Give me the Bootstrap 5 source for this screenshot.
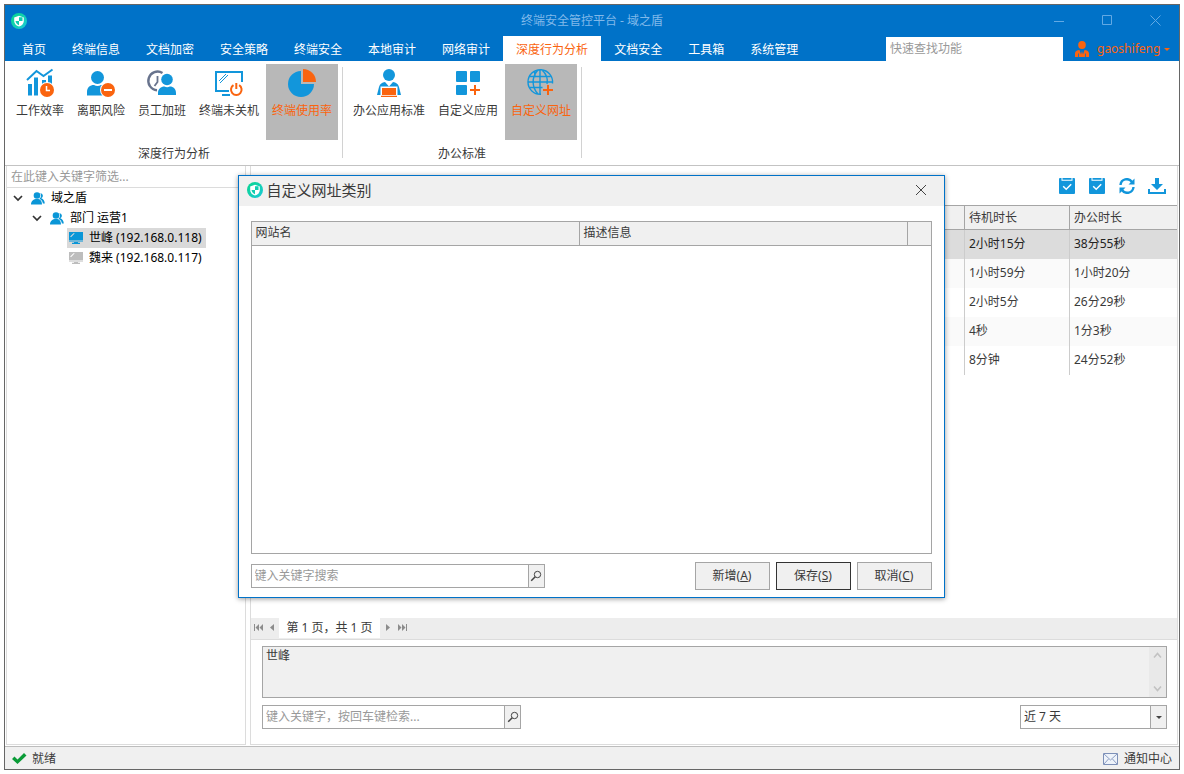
<!DOCTYPE html>
<html lang="zh-CN">
<head>
<meta charset="utf-8">
<meta name="viewport" content="width=device-width, initial-scale=1">
<title>终端安全管控平台 - 域之盾</title>
<link href="https://cdn.jsdelivr.net/npm/bootstrap@5.3.0/dist/css/bootstrap.min.css" rel="stylesheet">
<style>
  :root { --brand: #0072c8; --accent: #fa640f; --sky: #1296db; --line: #dcdcdc; --edge: #a5a5a5; --face: #f0f0f0; --ink: #3a3a3a; }
  body { font: 12px/18px "Noto Sans", "Noto Sans CJK SC", sans-serif; color: var(--ink); background: #fff; }
  button, input, select, textarea { font: inherit; color: inherit; }
  button { background: none; border: 0; padding: 0; }
  svg { display: block; flex: none; }
  .app { min-height: calc(100vh - 8px); margin: 4px; border: 1px solid #666; }
  .app-head { background: var(--brand); }
  .title-row { height: 31px; color: #80b9ea; }
  .title-row .side { flex: 1 1 0; padding-left: 6px; }
  .win-btn { width: 48px; height: 31px; display: grid; place-items: center; color: #62a9e4; }
  .tab-row { height: 25px; }
  .tab-row .nav-link { color: #fff; padding: 5px 13px 2px; line-height: 18px; }
  .tab-row .nav-link.active { color: var(--accent); background: #fff; }
  .quick { width: 177px; height: 24px; border: 0; padding: 0 4px 2px; background: #fff; }
  ::placeholder { color: #999; opacity: 1; }
  .user { color: var(--accent); width: 116px; padding-left: 12px; height: 24px; }
  .caret { width: 0; border: 3px solid transparent; border-top-color: currentColor; border-bottom: 0; }
  .ribbon { border-bottom: 1px solid #c3c3c3; height: 105px; padding: 3px 5px 6px; }
  .rgroup { padding-right: 5px; margin-right: 4px; position: relative; }
  .rgroup::after { content: ""; position: absolute; right: 0; top: 3px; bottom: 1px; border-right: 1px solid #d2d2d2; }
  .rgroup-name { padding-top: 5px; }
  .rbtns { gap: 1px; }
  .rbtn { height: 76px; padding: 4px 6px 0; display: flex; flex-direction: column; align-items: center; gap: 2px; }
  .rbtn svg { width: 32px; height: 32px; }
  .rbtn.on { background: #b8b8b8; color: var(--accent); }
  .work { padding: 0 1px; gap: 4px; }
  .pane { border: 1px solid var(--line); border-top: 0; }
  .side-pane { width: 240px; flex: none; }
  .filter { border: 0; border-bottom: 1px solid var(--line); height: 22px; padding: 0 4px; display: block; width: 100%; }
  .tree { color: #000; padding-left: 6px; }
  .tree ul { padding-left: 19px; }
  .node { height: 20px; gap: 6px; padding-right: 4px; }
  .leaf { padding-left: 2px; margin-left: 16px; width: fit-content; }
  .leaf.sel { background: #d9d9d9; }
  .tools { height: 39px; padding: 0 10px; gap: 10px; }
  .tools button { width: 20px; height: 20px; display: grid; place-items: center; }
  .grid { width: 100%; table-layout: fixed; border-collapse: separate; border-spacing: 0; }
  .grid th { font-weight: 400; background: var(--face); border-right: 1px solid var(--edge); border-bottom: 1px solid var(--edge); height: 24px; padding: 0 4px; }
  .grid th:last-child { border-right: 0; }
  .data th { border-top: 1px solid var(--edge); height: 25px; }
  .data td { height: 29px; padding: 0 4px 1px; border-right: 1px solid #ccc; }
  .data td:last-child { border-right: 0; }
  .data tr:nth-child(even) td { background: #fafafa; }
  .data tr.sel td { background: #dcdcdc; color: #222; }
  .pager { background: #ededed; border-bottom: 1px solid var(--line); height: 22px; padding: 0 3px; color: #8c8c8c; }
  .pager .now { background: #fff; color: var(--ink); height: 20px; padding: 0 4px; line-height: 19px; min-width: 101px; }
  .foot-form { padding: 6px 10px 15px 11px; gap: 7px; }
  .memo-wrap { background: var(--face); border: 1px solid var(--edge); height: 52px; }
  .memo-wrap textarea { border: 0; background: none; resize: none; overflow: hidden; padding: 0 3px; outline: 0; }
  .memo-bar { width: 17px; background: #e9e9e9; color: #c2c2c2; padding: 5px 4px; }
  .combo { border: 1px solid var(--edge); height: 24px; background: #fff; }
  .combo input, .combo select { border: 0; padding: 0 3px; min-width: 0; background: none; appearance: none; outline: 0; }
  .combo .end { width: 16px; border-left: 1px solid var(--edge); background: var(--face); display: grid; place-items: center; color: #444; flex: none; }
  .status { background: var(--face); border-top: 1px solid #bdbdbd; height: 23px; padding: 1px 7px 0; margin-top: 1px; }
  .overlay { position: absolute; inset: 0 2px 2px 0; pointer-events: none; }
  .dlg { width: 100%; max-width: 707px; background: #fff; border: 1px solid var(--brand); box-shadow: 0 1px 5px rgba(0,0,0,.4); pointer-events: auto; }
  .dlg-head { background: var(--face); height: 30px; padding: 0 8px 2px; gap: 4px; font-size: 15px; }
  .dlg-body { padding: 15px 12px 7px; gap: 8px; }
  .list-box { border: 1px solid var(--edge); min-height: 333px; }
  .dlg-btns { gap: 6px; }
  .dlg-btn { width: 75px; height: 28px; border: 1px solid var(--edge); background: var(--face); }
  .dlg-btn.main { border-color: #333; }
  .find-box { width: 294px; }
  .find-row { width: 259px; }
  .range { width: 147px; }
</style>
</head>
<body>
<svg width="0" height="0" class="position-absolute" aria-hidden="true">
  <defs>
    <linearGradient id="lg" x1="0" y1="0" x2="1" y2="1"><stop offset="0" stop-color="#08d68c"/><stop offset="1" stop-color="#1bc9d8"/></linearGradient>
    <symbol id="logo" viewBox="0 0 16 16"><circle cx="8" cy="8" r="8" fill="url(#lg)"/><path d="M8 2.800 12.800 4.500V8c0 2.700-1.900 4.500-4.800 5.600C5.100 12.500 3.200 10.700 3.200 8V4.500z" fill="#fff"/><path d="M8 4.200h3.500V8H8zM4.500 8H8v4.200C6 11.300 4.700 10 4.500 8z" fill="#10cdb0"/></symbol>
    <symbol id="people" viewBox="0 0 14 13"><circle cx="6" cy="3.500" r="3.300"/><path d="M0 12.500C0 9 2.500 7 6 7s5 2 5 5.500zM9.300 1.200a2.600 2.600 0 0 1 1 5c2.200.9 3.400 2.800 3.500 5.300h-1.900c-.3-2-1.300-3.600-3.300-4.700A4.600 4.600 0 0 0 9.300 1.200z"/></symbol>
    <symbol id="pc" viewBox="0 0 14 12"><path fill-rule="evenodd" d="M0 0h14v8.500H0zM2 5.200 5.800 1.300H4.500L1.200 4.500zM0 9.300h14v.5H0zM5 9.500h4v1.300h2V12H3v-1.200h2z"/></symbol>
    <symbol id="down" viewBox="0 0 10 10"><path d="M1 3l4 4 4-4" fill="none" stroke="#333" stroke-width="1.700"/></symbol>
    <symbol id="lens" viewBox="0 0 12 12"><circle cx="7.500" cy="4.500" r="3.200" fill="none" stroke="currentColor"/><path d="M5.200 6.800 1.200 10.800" stroke="currentColor" stroke-width="1.500"/></symbol>
    <symbol id="clip" viewBox="0 0 16 16"><path fill="#1296db" d="M1 0h1.500v2.800h11V0H15a1 1 0 0 1 1 1v14a1 1 0 0 1-1 1H1a1 1 0 0 1-1-1V1a1 1 0 0 1 1-1zM3.500 0h9v1.800h-9z"/><path d="M4.200 8.300 7.200 11.200 12.200 6.200" fill="none" stroke="#fff" stroke-width="1.500"/></symbol>
  </defs>
</svg>

<div class="app d-flex flex-column">
  <header class="app-head">
    <div class="title-row d-flex align-items-center">
      <div class="side"><svg width="16" height="16"><use href="#logo"/></svg></div>
      <div>终端安全管控平台 - 域之盾</div>
      <div class="side d-flex justify-content-end">
        <button class="win-btn" aria-label="最小化"><svg width="11" height="11"><path d="M0 6.500h10" stroke="currentColor"/></svg></button>
        <button class="win-btn" aria-label="最大化"><svg width="11" height="11"><path d="M.5.500h9v9h-9z" fill="none" stroke="currentColor"/></svg></button>
        <button class="win-btn" aria-label="关闭"><svg width="11" height="11"><path d="M.5.500l10 10m0-10-10 10" stroke="currentColor"/></svg></button>
      </div>
    </div>
    <div class="tab-row d-flex align-items-end">
      <nav class="nav flex-nowrap ps-1">
        <a class="nav-link" href="#">首页</a><a class="nav-link" href="#">终端信息</a><a class="nav-link" href="#">文档加密</a><a class="nav-link" href="#">安全策略</a><a class="nav-link" href="#">终端安全</a><a class="nav-link" href="#">本地审计</a><a class="nav-link" href="#">网络审计</a><a class="nav-link active" href="#">深度行为分析</a><a class="nav-link" href="#">文档安全</a><a class="nav-link" href="#">工具箱</a><a class="nav-link" href="#">系统管理</a>
      </nav>
      <input class="quick ms-auto" type="search" placeholder="快速查找功能" aria-label="快速查找功能">
      <button class="user d-flex align-items-center">
        <svg width="14" height="16" fill="currentColor"><ellipse cx="7" cy="4" rx="3.800" ry="4"/><path d="M0 16v-3.500C0 10.300 2 9 4.500 9L6 13.500 7 10l1 3.500L9.500 9C12 9 14 10.300 14 12.500V16z"/><path d="M3.500 12.500V16M10.500 12.500V16" stroke="#0072c8" stroke-width=".8"/></svg>
        <span class="ms-2 me-1">gaoshifeng</span><span class="caret"></span>
      </button>
    </div>
  </header>

  <section class="ribbon d-flex">
    <div class="rgroup">
      <div class="rbtns d-flex">
        <button class="rbtn"><svg viewBox="0 0 32 32"><path d="M3 12 12.500 3l7 5L28.500 1.500" fill="none" stroke="#1296db" stroke-width="2"/><path fill="#1296db" d="M4 16h4v11.500H4zM10 9.500h4v18h-4zM18 12h4v15.500h-4zM24 7.500h4V16h-4z"/><circle cx="23" cy="22" r="8" fill="#fff"/><circle cx="23" cy="22" r="7" fill="#fa640f"/><path d="M22.500 18v4.500H26" fill="none" stroke="#fff" stroke-width="1.500"/></svg>工作效率</button>
        <button class="rbtn"><svg viewBox="0 0 32 32"><circle cx="12.500" cy="9.500" r="6.500" fill="#1296db"/><path d="M2 27.500V24c0-4.500 3-7 7-7 2 1.300 5 1.300 7 0 4 0 7 2.500 7 7v3.500z" fill="#1296db"/><circle cx="23" cy="22" r="8" fill="#fff"/><circle cx="23" cy="22" r="7" fill="#fa640f"/><path d="M19 22h8" stroke="#fff" stroke-width="2"/></svg>离职风险</button>
        <button class="rbtn"><svg viewBox="0 0 32 32"><path d="M11 22.200A9.300 9.300 0 1 1 16.500 5" fill="none" stroke="#68738d" stroke-width="2.400"/><path d="M11.500 8v6l-3 4" fill="none" stroke="#68738d" stroke-width="1.800"/><circle cx="21" cy="11.500" r="7" fill="#fff"/><circle cx="21" cy="11.500" r="5.800" fill="#1296db"/><path d="M12 27v-2c0-4 3-6.500 6.500-6.500 1.700 1 3.600 1 5.300 0C27.500 18.500 30 21 30 25v2z" fill="#1296db"/></svg>员工加班</button>
        <button class="rbtn"><svg viewBox="0 0 32 32"><path d="M16 23H3V4h26v10M9 27h8" fill="none" stroke="#1296db" stroke-width="2"/><path d="m6 13 7-7m-6 9 8-8" stroke="#1296db"/><path d="M20.500 17.200a5.300 5.300 0 1 0 5.600 0M23.300 15v6" fill="none" stroke="#fa640f" stroke-width="2"/></svg>终端未关机</button>
        <button class="rbtn on"><svg viewBox="0 0 32 32"><path d="M15 3a13 13 0 1 0 13 13H15z" fill="#1296db"/><path d="M17 1a13 13 0 0 1 13 13H17z" fill="#fa640f"/></svg>终端使用率</button>
      </div>
      <div class="rgroup-name text-center">深度行为分析</div>
    </div>
    <div class="rgroup">
      <div class="rbtns d-flex">
        <button class="rbtn"><svg viewBox="0 0 32 32"><circle cx="16" cy="7" r="6" fill="#1296db"/><path d="M4 27l2-8c1-3.500 3-4.500 6-5l4 4.500 4-4.500c3 .5 5 1.500 6 5l2 8z" fill="#1296db"/><path d="M7.500 28v-9.500h17V28" fill="#fff"/><path fill="#fa640f" d="M9 20h14v7H9zM8 27.800h16v1.200H8z"/></svg>办公应用标准</button>
        <button class="rbtn"><svg viewBox="0 0 32 32"><rect x="4" y="3" width="11" height="11" rx="1" fill="#1296db"/><rect x="18" y="3" width="10" height="11" rx="1" fill="#1296db"/><rect x="4" y="17" width="11" height="10" rx="1" fill="#1296db"/><path d="M18 22h10M23 17v10" stroke="#fa640f" stroke-width="2"/></svg>自定义应用</button>
        <button class="rbtn on"><svg viewBox="0 0 32 32" fill="none" stroke="#1296db" stroke-width="1.400"><path d="M27.500 15.500A12.300 12.300 0 1 0 16 26.300M15 1.700v24.600M13 2C6.500 9 6.500 19 13 26M17 2c4.500 4 6 9 5 14M2.700 14H27.500M4.500 8.500h21M4.500 19.500h13M10 2.800c-1 5 1 6 1 6"/><path d="M18 22h10M23 17v10" stroke="#fa640f" stroke-width="2"/></svg>自定义网址</button>
      </div>
      <div class="rgroup-name text-center">办公标准</div>
    </div>
  </section>

  <main class="work d-flex flex-grow-1">
    <aside class="pane side-pane">
      <input class="filter" type="text" placeholder="在此键入关键字筛选..." aria-label="筛选">
      <ul class="tree list-unstyled mb-0">
        <li>
          <div class="node d-flex align-items-center"><svg width="12" height="10"><use href="#down" width="10" height="10"/></svg><svg width="14" height="13" fill="#0a96d7"><use href="#people"/></svg>域之盾</div>
          <ul class="list-unstyled">
            <li>
              <div class="node d-flex align-items-center"><svg width="12" height="10"><use href="#down" width="10" height="10"/></svg><svg width="14" height="13" fill="#0a96d7"><use href="#people"/></svg>部门 运营1</div>
              <ul class="list-unstyled">
                <li class="node leaf sel d-flex align-items-center"><svg width="14" height="12" fill="#0a96d7"><use href="#pc"/></svg>世峰 (192.168.0.118)</li>
                <li class="node leaf d-flex align-items-center"><svg width="14" height="12" fill="#bdbdbd"><use href="#pc"/></svg>魏来 (192.168.0.117)</li>
              </ul>
            </li>
          </ul>
        </li>
      </ul>
    </aside>

    <section class="pane flex-grow-1 d-flex flex-column">
      <div class="tools d-flex justify-content-end align-items-center">
        <button aria-label="选择"><svg width="16" height="16"><use href="#clip"/></svg></button>
        <button aria-label="确认"><svg width="16" height="16"><use href="#clip"/></svg></button>
        <button aria-label="刷新"><svg width="16" height="16" fill="none" stroke="#1296db" stroke-width="2.400"><path d="M1.500 7A6.300 6.300 0 0 1 13 4M14.500 9A6.300 6.300 0 0 1 3 12"/><path d="M15.500.5v6h-6zM.5 15.500v-6h6z" fill="#1296db" stroke="none"/></svg></button>
        <button aria-label="下载"><svg width="18" height="16" fill="#1296db"><path d="M7 0h4v6h4l-6 6-6-6h4zM0 11h2v3h14v-3h2v5H0z"/></svg></button>
      </div>
      <table class="grid data">
        <colgroup><col><col style="width:105px"><col style="width:107px"></colgroup>
        <thead><tr><th></th><th>待机时长</th><th>办公时长</th></tr></thead>
        <tbody>
          <tr class="sel"><td></td><td>2小时15分</td><td>38分55秒</td></tr>
          <tr><td></td><td>1小时59分</td><td>1小时20分</td></tr>
          <tr><td></td><td>2小时5分</td><td>26分29秒</td></tr>
          <tr><td></td><td>4秒</td><td>1分3秒</td></tr>
          <tr><td></td><td>8分钟</td><td>24分52秒</td></tr>
        </tbody>
      </table>
      <div class="pager d-flex align-items-start mt-auto">
        <button aria-label="第一页"><svg width="14" height="20" fill="currentColor"><path d="M0 6h1v7H0zM5 6v7L1.500 9.500zM9 6v7L5.500 9.500z"/></svg></button>
        <button aria-label="上一页"><svg width="11" height="20" fill="currentColor"><path d="M6 6v7L2 9.500z"/></svg></button>
        <div class="now text-center">第 1 页，共 1 页</div>
        <button aria-label="下一页"><svg width="16" height="20" fill="currentColor"><path d="M6 6v7l4-3.500z"/></svg></button>
        <button aria-label="最后一页"><svg width="14" height="20" fill="currentColor"><path d="M2 6v7l3.500-3.500zM6 6v7l3.500-3.500zM10 6h1v7h-1z"/></svg></button>
      </div>
      <div class="foot-form d-flex flex-column">
        <div class="memo-wrap d-flex">
          <textarea class="flex-grow-1" readonly aria-label="说明">世峰</textarea>
          <div class="memo-bar d-flex flex-column justify-content-between"><svg width="9" height="7"><path d="m1 5.500 3.500-4 3.500 4" fill="none" stroke="currentColor" stroke-width="1.600"/></svg><svg width="9" height="7"><path d="m1 1.500 3.500 4 3.500-4" fill="none" stroke="currentColor" stroke-width="1.600"/></svg></div>
        </div>
        <div class="d-flex justify-content-between">
          <div class="combo find-row d-flex"><input class="flex-grow-1" type="text" placeholder="键入关键字，按回车键检索..." aria-label="检索"><button class="end" aria-label="搜索"><svg width="12" height="12"><use href="#lens"/></svg></button></div>
          <label class="combo range d-flex"><select class="flex-grow-1" aria-label="时间范围"><option>近 7 天</option></select><span class="end"><span class="caret"></span></span></label>
        </div>
      </div>
    </section>
  </main>

  <footer class="status d-flex align-items-center justify-content-between">
    <span class="d-flex align-items-center"><svg class="me-1" width="16" height="12"><path d="M0 6 2.500 3.500 5.500 6.500 12 0 14.500 2.500 5.500 11z" fill="#0a9b37"/></svg>就绪</span>
    <a href="#" class="d-flex align-items-center text-reset text-decoration-none"><svg class="me-1" width="17" height="12"><path d="M.5.500h14v11H.5z" fill="#eef3fa" stroke="#7d90b8"/><path d="m1 1 6.500 6L14 1M1 11l4.500-5M14 11 9.500 6" fill="none" stroke="#8c9dc2"/></svg>通知中心</a>
  </footer>
</div>

<div class="overlay d-flex align-items-center justify-content-center">
  <div class="dlg" role="dialog" aria-labelledby="dlgTitle">
    <div class="dlg-head d-flex align-items-center">
      <svg width="16" height="16"><use href="#logo"/></svg>
      <span id="dlgTitle" class="me-auto">自定义网址类别</span>
      <button class="pe-2" aria-label="关闭"><svg width="13" height="12"><path d="m1 1 10 10M11 1 1 11" stroke="#444"/></svg></button>
    </div>
    <div class="dlg-body d-flex flex-column">
      <div class="list-box">
        <table class="grid">
          <colgroup><col><col><col style="width:23px"></colgroup>
          <thead><tr><th>网站名</th><th>描述信息</th><th></th></tr></thead>
        </table>
      </div>
      <div class="d-flex justify-content-between align-items-center">
        <div class="combo find-box d-flex"><input class="flex-grow-1" type="text" placeholder="键入关键字搜索" aria-label="键入关键字搜索"><button class="end" aria-label="搜索"><svg width="12" height="12"><use href="#lens"/></svg></button></div>
        <div class="dlg-btns d-flex">
          <button class="dlg-btn">新增(<u>A</u>)</button>
          <button class="dlg-btn main">保存(<u>S</u>)</button>
          <button class="dlg-btn">取消(<u>C</u>)</button>
        </div>
      </div>
    </div>
  </div>
</div>
<script src="https://cdn.jsdelivr.net/npm/bootstrap@5.3.0/dist/js/bootstrap.bundle.min.js"></script>
</body>
</html>
